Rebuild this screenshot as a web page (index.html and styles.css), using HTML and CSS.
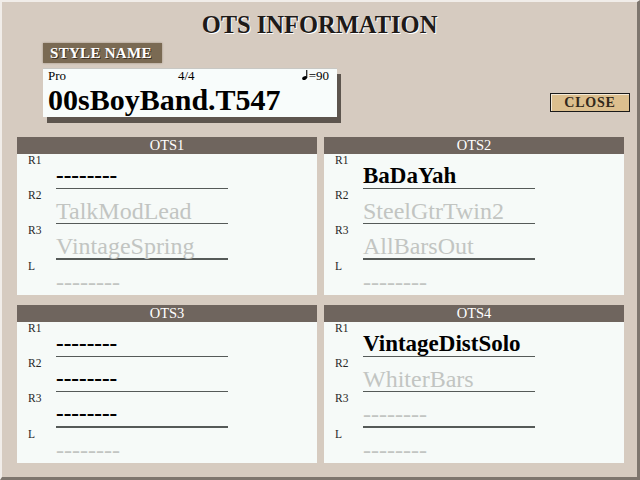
FILE: index.html
```html
<!DOCTYPE html>
<html lang="en">
  <head>
    <meta charset="UTF-8" />
    <title>OTS INFORMATION</title>
    <link rel="stylesheet" href="styles.css">
  </head>
  <body>
    <div class="window">
      <h1 class="title">OTS INFORMATION</h1>
      <div class="top">
        <div class="style-col">
          <div class="style-label">STYLE NAME</div>
          <div class="style-box">
            <div class="style-meta">
              <span class="meta-cat">Pro</span>
              <span class="meta-beat">4/4</span>
              <span class="meta-tempo">
                <svg class="note" width="6" height="10" viewBox="0 0 6 10">
                  <ellipse cx="2.6" cy="8.1" rx="2.5" ry="1.8" transform="rotate(-25 2.6 8.1)" fill="#000" />
                  <rect x="4.2" y="0" width="1.1" height="8" fill="#000" />
                </svg>=90
              </span>
            </div>
            <div class="style-name">00sBoyBand.T547</div>
          </div>
        </div>
        <div class="close-btn">CLOSE</div>
      </div>
      <div class="ots-grid">
        <div class="ots-panel">
          <div class="ots-head">OTS1</div>
          <div class="ots-body">
            <div class="part-label">R1</div>
            <div class="part-value on">--------</div>
            <div class="part-label">R2</div>
            <div class="part-value off">TalkModLead</div>
            <div class="part-label">R3</div>
            <div class="part-value off r3">VintageSpring</div>
            <div class="part-label">L</div>
            <div class="part-value off last">--------</div>
          </div>
        </div>
        <div class="ots-panel">
          <div class="ots-head">OTS2</div>
          <div class="ots-body">
            <div class="part-label">R1</div>
            <div class="part-value on">BaDaYah</div>
            <div class="part-label">R2</div>
            <div class="part-value off">SteelGtrTwin2</div>
            <div class="part-label">R3</div>
            <div class="part-value off r3">AllBarsOut</div>
            <div class="part-label">L</div>
            <div class="part-value off last">--------</div>
          </div>
        </div>
        <div class="ots-panel">
          <div class="ots-head">OTS3</div>
          <div class="ots-body">
            <div class="part-label">R1</div>
            <div class="part-value on">--------</div>
            <div class="part-label">R2</div>
            <div class="part-value on">--------</div>
            <div class="part-label">R3</div>
            <div class="part-value on r3">--------</div>
            <div class="part-label">L</div>
            <div class="part-value off last">--------</div>
          </div>
        </div>
        <div class="ots-panel">
          <div class="ots-head">OTS4</div>
          <div class="ots-body">
            <div class="part-label">R1</div>
            <div class="part-value on">VintageDistSolo</div>
            <div class="part-label">R2</div>
            <div class="part-value off">WhiterBars</div>
            <div class="part-label">R3</div>
            <div class="part-value off r3">--------</div>
            <div class="part-label">L</div>
            <div class="part-value off last">--------</div>
          </div>
        </div>
      </div>
    </div>
  </body>
</html>
```

FILE: styles.css
```css
:root {
  --bg: #d6cbc0;
  --panel-bg: #f6faf8;
  --head-bg: #6f655e;
  --line: #555a58;
  --off: #c2c5c2;
}

html,
body {
  margin: 0;
  padding: 0;
}

body {
  font-family: "Liberation Serif", "DejaVu Serif", serif;
  background-color: var(--bg);
}

.window {
  box-sizing: border-box;
  width: 640px;
  height: 480px;
  background-color: var(--bg);
  border-left: 2px solid #f1ede9;
  border-top: 2px solid #f1ede9;
  border-right: 3px solid #7e766e;
  border-bottom: 3px solid #7e766e;
  overflow: hidden;
}

.title {
  margin: 9px 0 0 0;
  font-size: 24.5px;
  line-height: 27px;
  font-weight: bold;
  text-align: center;
  color: #1e1a18;
  text-shadow: 1px 1px 0 #fff;
}

.top {
  display: flex;
  justify-content: space-between;
  padding: 5px 7px 0 41px;
}

.style-label {
  display: inline-block;
  box-sizing: border-box;
  width: 119px;
  height: 20px;
  padding-left: 7px;
  background-color: #7a6a53;
  box-shadow: 0 0 2px #9c8e7c;
  color: #fff;
  font-size: 15px;
  line-height: 21px;
  font-weight: bold;
  letter-spacing: 0.3px;
  text-shadow: 1px 1px 0 #3c3024;
}

.style-box {
  box-sizing: border-box;
  width: 294px;
  height: 49px;
  margin-top: 5px;
  padding: 0 8px 0 5px;
  background-color: #f8fcfb;
  border-top: 1px solid #c8c8c4;
  box-shadow: 4px 6px 0 #5d554e;
  color: #000;
}

.style-meta {
  display: flex;
  font-size: 13px;
  line-height: 14px;
  height: 14px;
}

.meta-cat {
  width: 130px;
}

.meta-tempo {
  margin-left: auto;
}

.note {
  margin-right: 1px;
}

.style-name {
  font-size: 30px;
  line-height: 33px;
  font-weight: bold;
}

.close-btn {
  box-sizing: border-box;
  width: 80px;
  height: 19px;
  margin-top: 50px;
  border: 1px solid #1a1a1a;
  box-shadow: inset 1px 1px 0 #f4ead8;
  background-color: #dcbf8e;
  color: #33291c;
  font-size: 14px;
  line-height: 17px;
  font-weight: bold;
  letter-spacing: 0.8px;
  text-align: center;
}

.ots-grid {
  display: grid;
  grid-template-columns: 300px 300px;
  grid-template-rows: 158px 158px;
  column-gap: 7px;
  row-gap: 10px;
  padding: 0 0 0 15px;
  margin-top: 20px;
}

.ots-panel {
  background-color: var(--panel-bg);
}

.ots-head {
  height: 17px;
  background-color: var(--head-bg);
  color: #fff;
  font-size: 14.5px;
  line-height: 17px;
  text-align: center;
}

.part-label {
  padding-left: 11px;
  font-size: 11.5px;
  line-height: 13px;
  color: #262626;
}

.part-value {
  width: 172px;
  height: 21px;
  margin-left: 39px;
  font-size: 24px;
  line-height: 18px;
  white-space: nowrap;
  border-bottom: 1px solid var(--line);
}

.part-value.r3 {
  border-bottom-width: 2px;
}

.part-value.last {
  border-bottom: none;
}

.on {
  color: #000;
  font-size: 23px;
  font-weight: bold;
}

.off {
  color: var(--off);
}
```
